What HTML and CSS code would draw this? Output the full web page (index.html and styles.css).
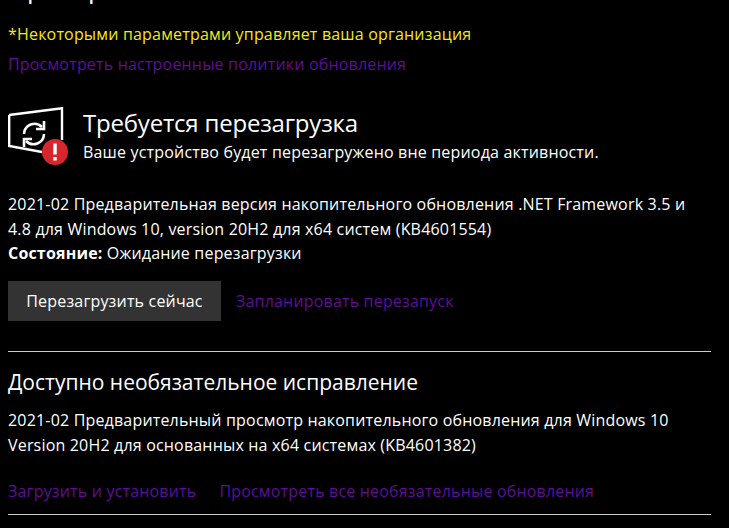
FILE: index.html
```html
<!DOCTYPE html>
<html lang="ru">
<head>
<meta charset="utf-8">
<title>Обновления</title>
<link rel="stylesheet" href="styles.css">
</head>
<body>
<main class="page">
  <h1 class="clipped-title">Проверка обновлений</h1>
  <p class="notice">*Некоторыми параметрами управляет ваша организация</p>
  <a class="link policy" href="#">Просмотреть настроенные политики обновления</a>
  <section class="status">
    <svg class="status-icon" width="62" height="62" viewBox="0 0 62 62" aria-hidden="true">
      <path d="M1.200 8 L54 1.200 V33 M34 45 L1.200 39 V8" fill="none" stroke="#fff" stroke-width="2.400"/>
      <path d="M16 27 A10.500 10.500 0 0 1 34 20 M36 27 A10.500 10.500 0 0 1 18 34" fill="none" stroke="#fff" stroke-width="2.600"/>
      <path d="M36 14 V22 H28 M16 40 V32 H24" fill="none" stroke="#fff" stroke-width="2.600"/>
      <circle cx="47" cy="45" r="13" fill="#d8262c"/>
      <rect x="45.250" y="36.500" width="3.500" height="11" fill="#fff"/>
      <rect x="45.250" y="50" width="3.500" height="3.500" fill="#fff"/>
    </svg>
    <div class="status-text">
      <h2 class="status-title">Требуется перезагрузка</h2>
      <p class="status-sub">Ваше устройство будет перезагружено вне периода активности.</p>
    </div>
  </section>
  <p class="body-text update-name">2021-02 Предварительная версия накопительного обновления .NET Framework 3.5 и 4.8 для Windows 10, version 20H2 для x64 систем (KB4601554)</p>
  <p class="body-text state"><b>Состояние:</b> Ожидание перезагрузки</p>
  <div class="actions">
    <button class="button" type="button">Перезагрузить сейчас</button>
    <a class="link" href="#">Запланировать перезапуск</a>
  </div>
  <hr class="rule">
  <h2 class="section-title">Доступно необязательное исправление</h2>
  <p class="body-text optional">2021-02 Предварительный просмотр накопительного обновления для Windows 10 Version 20H2 для основанных на x64 системах (KB4601382)</p>
  <div class="links">
    <a class="link" href="#">Загрузить и установить</a>
    <a class="link" href="#">Просмотреть все необязательные обновления</a>
  </div>
  <hr class="rule bottom-rule">
</main>
</body>
</html>
```
FILE: styles.css
```css
* { box-sizing: border-box; }
html, body { margin: 0; height: 100%; overflow: hidden; background: #000; }
body { font-family: "Open Sans", "Noto Sans", sans-serif; font-size: 16px; color: #fff; letter-spacing: 0.18px; }
.page { padding: 0 18px 0 8px; height: 528px; overflow: hidden; }
p, h1, h2 { margin: 0; font-weight: 400; }
.clipped-title { font-size: 26px; line-height: 32px; height: 32px; margin-top: -28px; margin-bottom: 19px; letter-spacing: 0; }
.notice { color: #f5e71e; line-height: 22px; }
.link { color: #5e0f96; text-decoration: none; line-height: 22px; }
.policy { display: block; margin-top: 8px; }
.status { display: flex; gap: 13px; margin-top: 32px; height: 62px; }
.status-icon { flex: none; width: 62px; }
.status-title { font-size: 24px; line-height: 32px; letter-spacing: -0.2px; }
.status-sub { line-height: 22px; margin-top: 2px; }
.body-text { line-height: 24.5px; }
.update-name { margin-top: 23px; padding-right: 20px; }
.state b { font-weight: 700; }
.actions { display: flex; align-items: center; gap: 15px; margin-top: 15.5px; }
.button { width: 213px; height: 40px; background: #333; border: 0; color: #fff; font: inherit; letter-spacing: inherit; padding: 0; }
.rule { border: 0; border-top: 1px solid #ccc; margin: 30px 0 0; }
.section-title { font-size: 21px; line-height: 28px; margin-top: 16px; letter-spacing: 0; }
.optional { margin-top: 12px; }
.links { display: flex; gap: 23px; margin-top: 23px; }
.bottom-rule { margin-top: 12px; }
```
